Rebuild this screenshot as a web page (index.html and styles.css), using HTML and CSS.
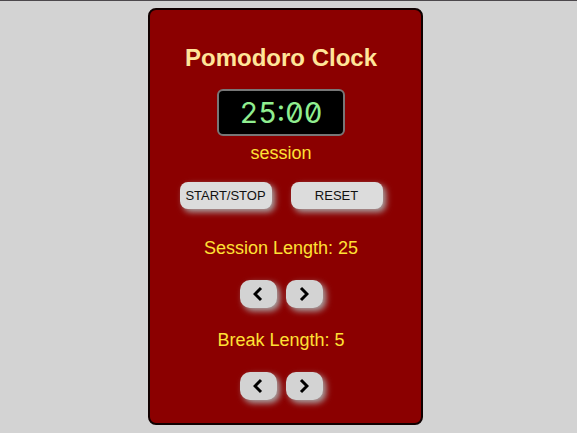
FILE: index.html
```html
<!DOCTYPE html>
<html lang="en">
<head>
<meta charset="utf-8">
<meta name="viewport" content="width=device-width, initial-scale=1">
<title>Pomodoro Clock</title>
<link rel="stylesheet" href="styles.css">
</head>
<body>
<main class="clock">
  <h1 class="title">Pomodoro Clock</h1>
  <div class="display">25:00</div>
  <p class="label">session</p>
  <div class="controls">
    <button class="btn" type="button">START/STOP</button>
    <button class="btn" type="button">RESET</button>
  </div>
  <p class="label length">Session Length: 25</p>
  <div class="steppers">
    <button class="step" type="button" aria-label="Decrease session length"><svg class="chevron" viewBox="0 0 10 16"><path d="M8 2 2 8l6 6"/></svg></button>
    <button class="step" type="button" aria-label="Increase session length"><svg class="chevron" viewBox="0 0 10 16"><path d="m2 2 6 6-6 6"/></svg></button>
  </div>
  <p class="label length">Break Length: 5</p>
  <div class="steppers">
    <button class="step" type="button" aria-label="Decrease break length"><svg class="chevron" viewBox="0 0 10 16"><path d="M8 2 2 8l6 6"/></svg></button>
    <button class="step" type="button" aria-label="Increase break length"><svg class="chevron" viewBox="0 0 10 16"><path d="m2 2 6 6-6 6"/></svg></button>
  </div>
</main>
</body>
</html>
```
FILE: styles.css
```css
* {
  box-sizing: border-box;
}

body {
  margin: 0;
  padding: 7px 6px 8px 0;
  border-top: 1px solid #4c484c;
  background: #d3d3d3;
  font-family: "Liberation Sans", Arial, sans-serif;
}

.clock {
  display: flex;
  flex-direction: column;
  align-items: center;
  width: 100%;
  max-width: 275px;
  margin: 0 auto;
  padding: 34px 18px 23px 9px;
  border: 2px solid #100000;
  border-radius: 8px;
  background: #8b0000;
}

.title {
  margin: 0 0 17px;
  color: #ffe599;
  font-size: 24px;
  line-height: 28px;
}

.display {
  padding: 0 20px;
  border: 2px solid #777;
  border-radius: 6px;
  background: #000;
  color: #90ee90;
  font-family: Inter, "DejaVu Sans", sans-serif;
  font-size: 29px;
  font-weight: 400;
  font-feature-settings: "zero", "tnum";
  line-height: 43px;
}

.label {
  margin: 7px 0 0;
  color: #ffe135;
  font-size: 18px;
  line-height: 20px;
}

.controls {
  display: flex;
  gap: 19px;
  margin-top: 19px;
}

.btn,
.step {
  padding: 0;
  border: 0;
  background: #dcdcdc;
  box-shadow: 3px 3px 6px #a9a9a9;
  color: #111;
}

.btn {
  width: 92px;
  height: 27px;
  border-radius: 8px;
  font-family: inherit;
  font-size: 13px;
}

.length {
  margin-top: 29px;
}

.steppers {
  display: flex;
  gap: 9px;
  margin-top: 22px;
}

.steppers + .length {
  margin-top: 22px;
}

.step {
  display: grid;
  place-items: center;
  width: 37px;
  height: 28px;
  border-radius: 10px;
  background: #d3d3d3;
}

.chevron {
  width: 10px;
  height: 16px;
  fill: none;
  stroke: #000;
  stroke-width: 3;
}
```
